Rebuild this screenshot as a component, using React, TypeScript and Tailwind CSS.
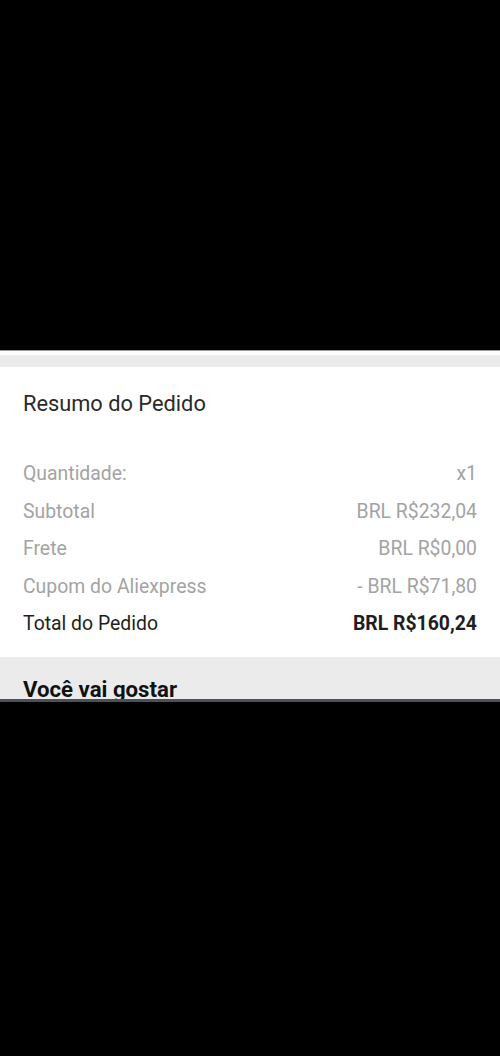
import React from "react";

const rows = [
  { label: "Quantidade:", value: "x1" },
  { label: "Subtotal", value: "BRL R$232,04" },
  { label: "Frete", value: "BRL R$0,00" },
  { label: "Cupom do Aliexpress", value: "- BRL R$71,80" },
];

export default function App() {
  return (
    <div className="w-[500px] h-[1056px] bg-black flex flex-col" style={{ fontFamily: "Roboto, 'Noto Sans', sans-serif" }}>
      <div className="h-[350px] bg-black" />
      <div className="h-px bg-[#9a9a9a]" />
      <div className="h-[4px] bg-white" />
      <div className="h-[12px] bg-[#ebebeb]" />
      <div className="bg-white h-[290px] px-[23px] pt-[24px]">
        <div className="text-[21.8px] leading-[26px] text-[#2a2a2a]">Resumo do Pedido</div>
        <div className="mt-[45px] flex flex-col gap-[13px]">
          {rows.map((r) => (
            <div key={r.label} className="flex justify-between text-[19.4px] leading-[24.5px] text-[#a3a3a3]">
              <span>{r.label}</span>
              <span>{r.value}</span>
            </div>
          ))}
          <div className="flex justify-between text-[19.4px] leading-[24.5px] text-[#1e1e1e]">
            <span>Total do Pedido</span>
            <span className="font-bold">BRL R$160,24</span>
          </div>
        </div>
      </div>
      <div className="h-[42px] bg-[#ebebeb] px-[23px] overflow-hidden">
        <div className="pt-[19px] text-[22.2px] leading-[26px] font-bold text-[#111]">Você vai gostar</div>
      </div>
      <div className="h-[3px] bg-[#4b5156]" />
      <div className="flex-1 bg-black" />
    </div>
  );
}
